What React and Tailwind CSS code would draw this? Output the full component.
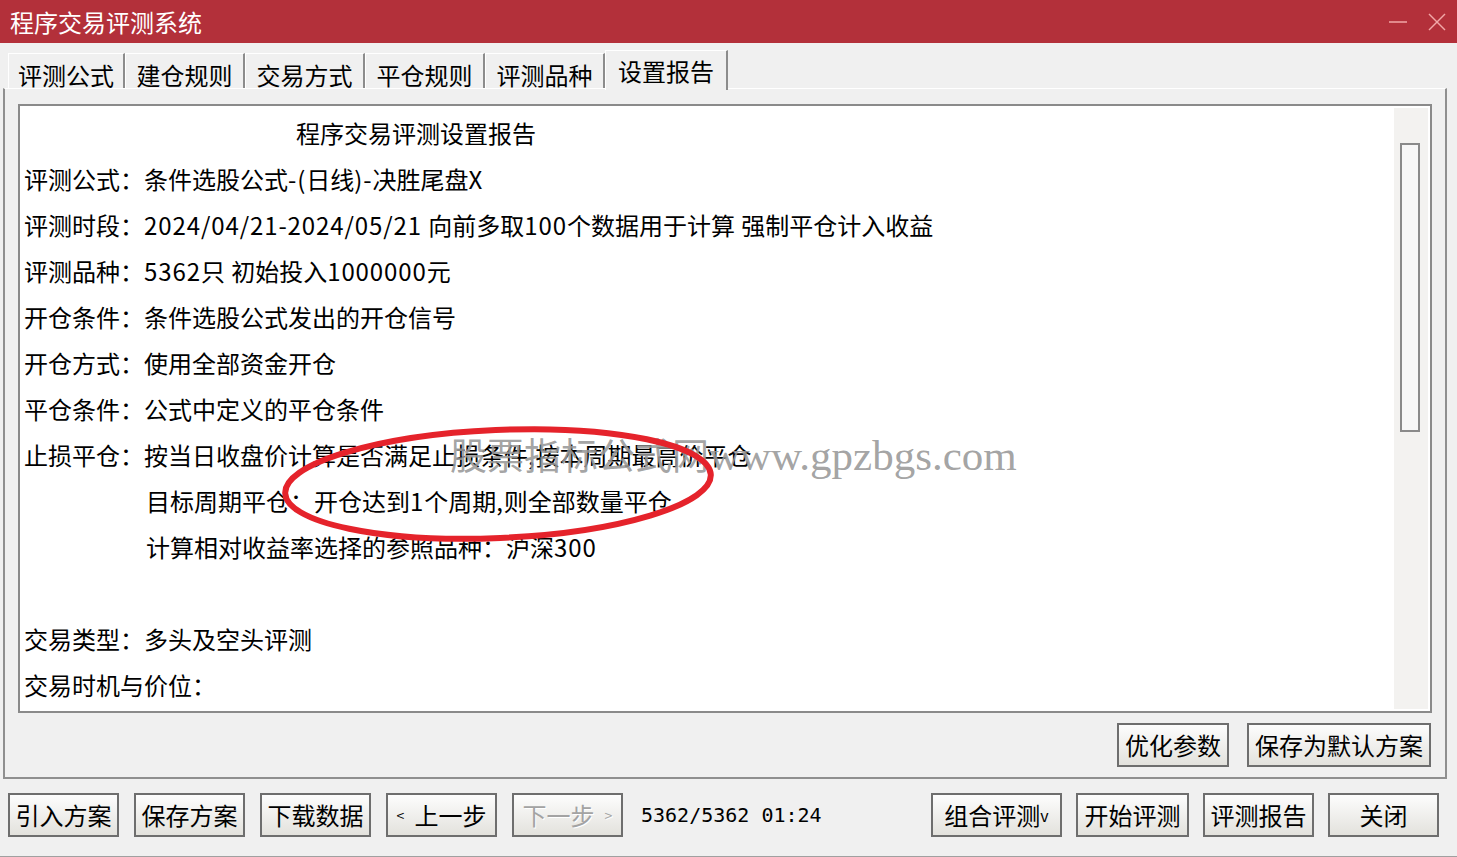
import React from "react";

const tabs = ["评测公式", "建仓规则", "交易方式", "平仓规则", "评测品种", "设置报告"];
const tabWidths = ["w-[117px]", "w-[120px]", "w-[120px]", "w-[120px]", "w-[120px]"];

const lines = [
  { text: "程序交易评测设置报告", indent: "pl-[272px]" },
  { text: "评测公式：条件选股公式-(日线)-决胜尾盘X" },
  { text: "评测时段：2024/04/21-2024/05/21 向前多取100个数据用于计算 强制平仓计入收益" },
  { text: "评测品种：5362只 初始投入1000000元" },
  { text: "开仓条件：条件选股公式发出的开仓信号" },
  { text: "开仓方式：使用全部资金开仓" },
  { text: "平仓条件：公式中定义的平仓条件" },
  { text: "止损平仓：按当日收盘价计算是否满足止损条件,按本周期最高价平仓" },
  { text: "目标周期平仓：开仓达到1个周期,则全部数量平仓", indent: "pl-[122px]" },
  { text: "计算相对收益率选择的参照品种：沪深300", indent: "pl-[122px]" },
  { text: "" },
  { text: "交易类型：多头及空头评测" },
  { text: "交易时机与价位：" },
];

// ascii runs get a bit of tracking so digits take the width of the old bitmap font
const Line = ({ text }) =>
  text.split(/([\x20-\x7e]+)/).map((part, i) =>
    /^[\x20-\x7e]+$/.test(part) ? (
      <span key={i} className="tracking-[0.9px]">
        {part}
      </span>
    ) : (
      <span key={i}>{part}</span>
    )
  );

const Btn = ({ children, w, disabled }) => (
  <button
    className={`${w} h-[44px] shrink-0 border-2 border-[#6e6e6e] bg-linear-to-b from-[#fdfdfd] to-[#e3e2dd] text-[24px] leading-none flex items-center justify-center ${
      disabled ? "text-[#a3a3a3] [text-shadow:1px_1px_0_#fff]" : "text-black"
    }`}
  >
    {children}
  </button>
);

const App = () => {
  return (
    <div className="w-[1457px] h-[857px] bg-[#f0f0f0] flex flex-col overflow-hidden font-['Noto_Sans_CJK_SC',sans-serif] text-black">
      {/* title bar */}
      <div className="h-[43px] shrink-0 bg-[#b3303a] flex items-center justify-between pl-[10px] pr-[10px]">
        <span className="text-white text-[24px] leading-none">程序交易评测系统</span>
        <div className="flex items-center gap-[18px]">
          <svg width="22" height="20" viewBox="0 0 22 20">
            <line x1="2" y1="10" x2="20" y2="10" stroke="#f2a7a7" strokeWidth="1.5" />
          </svg>
          <svg width="20" height="20" viewBox="0 0 20 20">
            <line x1="2" y1="2" x2="18" y2="18" stroke="#f2a7a7" strokeWidth="1.5" />
            <line x1="18" y1="2" x2="2" y2="18" stroke="#f2a7a7" strokeWidth="1.5" />
          </svg>
        </div>
      </div>

      {/* tabs */}
      <div className="h-[45px] shrink-0 flex items-end pl-[8px]">
        {tabs.map((t, i) =>
          i === tabs.length - 1 ? (
            <div
              key={t}
              className="h-[40px] w-[123px] border-l border-t border-white border-r-2 border-r-[#8c8c8c] flex items-start justify-center pt-[8px] text-[24px] leading-none relative top-[2px] bg-[#f0f0f0]"
            >
              {t}
            </div>
          ) : (
            <div
              key={t}
              className={`h-[35px] ${tabWidths[i]} border-l border-t border-white border-r-2 border-r-[#8c8c8c] flex items-start justify-center pt-[9px] text-[24px] leading-none`}
            >
              {t}
            </div>
          )
        )}
      </div>

      {/* main panel */}
      <div className="ml-[3px] w-[1444px] h-[691px] shrink-0 border-l-2 border-r-2 border-b-2 border-[#8f8f8f] border-t border-t-white flex flex-col">
        <div className="mt-[15px] ml-[13px] w-[1414px] h-[609px] border-2 border-[#8a8a8a] bg-white flex">
          <div className="flex-1 relative pt-[4px] pl-[4px]">
            {lines.map((l, i) => (
              <div key={i} className={`h-[46px] text-[24px] leading-[46px] whitespace-pre ${l.indent || ""}`}>
                <Line text={l.text} />
              </div>
            ))}
            {/* watermark */}
            <div className="absolute left-[430px] top-[328px] flex items-baseline text-[#999999]/90 whitespace-nowrap">
              <span className="text-[37px] leading-none">股票指标公式网</span>
              <span className="text-[43px] leading-none font-['Liberation_Serif',serif]">www.gpzbgs.com</span>
            </div>
            {/* red circle */}
            <svg className="absolute left-[250px] top-[314px]" width="480" height="140" viewBox="0 0 480 140">
              <ellipse
                cx="228"
                cy="64"
                rx="213"
                ry="54"
                fill="none"
                stroke="#e5232b"
                strokeWidth="6"
                transform="rotate(-2.5 228 64)"
              />
            </svg>
          </div>
          <div className="w-[34px] my-[2px] mr-[2px] bg-[#f3f2f0] shrink-0">
            <div className="ml-[6px] mt-[35px] w-[20px] h-[289px] border-2 border-[#8a8a8a] bg-[#f7f7f7]" />
          </div>
        </div>
        <div className="mt-[10px] flex justify-end gap-[18px] pr-[14px]">
          <Btn w="w-[112px]">优化参数</Btn>
          <Btn w="w-[184px]">保存为默认方案</Btn>
        </div>
      </div>

      {/* bottom bar */}
      <div className="flex-1 flex items-start pt-[14px] pl-[8px] pr-[18px] border-b border-[#a0a0a0]">
        <div className="flex gap-[15px]">
          <Btn w="w-[111px]">引入方案</Btn>
          <Btn w="w-[111px]">保存方案</Btn>
          <Btn w="w-[111px]">下载数据</Btn>
          <Btn w="w-[111px]">
            <span className="text-[14px] mr-[10px]">&lt;</span>上一步
          </Btn>
          <Btn w="w-[111px]" disabled>
            下一步<span className="text-[14px] ml-[10px]">&gt;</span>
          </Btn>
        </div>
        <div className="ml-[18px] h-[44px] flex items-center text-[20px] font-['DejaVu_Sans_Mono',monospace]">
          5362/5362 01:24
        </div>
        <div className="ml-auto flex gap-[14px]">
          <Btn w="w-[131px]">
            组合评测<span className="text-[16px]">v</span>
          </Btn>
          <Btn w="w-[113px]">开始评测</Btn>
          <Btn w="w-[111px]">评测报告</Btn>
          <Btn w="w-[111px]">关闭</Btn>
        </div>
      </div>
    </div>
  );
};

export default App;
